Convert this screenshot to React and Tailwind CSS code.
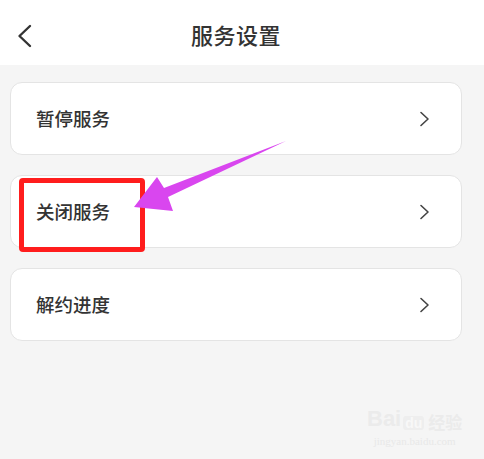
import React from 'react'

const items = ['暂停服务', '关闭服务', '解约进度']

function Chevron({ className, d }) {
    return (
        <svg className={className} viewBox="0 0 10 16" fill="none" stroke="currentColor" strokeWidth="1.6" strokeLinecap="round" strokeLinejoin="round">
            <path d={d} />
        </svg>
    )
}

export default function App() {
    return (
        <div className="relative w-[484px] h-[459px] overflow-hidden bg-[#f5f5f5] text-[#333]" style={{ fontFamily: '"Noto Sans CJK SC", "Noto Sans", sans-serif' }}>

            <header className="relative h-[65px] bg-white flex items-center justify-center">
                <svg className="absolute left-[16px] top-[24px] w-[17px] h-[24px] text-[#333]" viewBox="0 0 17 24" fill="none" stroke="currentColor" strokeWidth="2.4" strokeLinecap="round" strokeLinejoin="round">
                    <path d="M14 2 L3.5 12 L14 22" />
                </svg>
                <h1 className="text-[22px] font-medium tracking-[0.5px] text-[#333] mt-[3px] mr-[12px]">服务设置</h1>
            </header>

            <div className="flex flex-col gap-[20px] pl-[10px] pr-[22px] pt-[17px]">
                {items.map(label => (
                    <div key={label} className="h-[73px] rounded-[12px] bg-white border border-[#e4e4e4] flex items-center justify-between pl-[25px] pr-[31px]">
                        <span className="text-[18.5px] font-medium leading-none">{label}</span>
                        <Chevron className="w-[11px] h-[16px] text-[#444]" d="M1.5 1.5 L8.5 8 L1.5 14.5" />
                    </div>
                ))}
            </div>

            {/* highlight box around the second row */}
            <div className="absolute left-[19px] top-[178px] w-[126px] h-[74px] border-[5px] border-[#ff1d1d] rounded-[4px]" />

            {/* pointer arrow */}
            <svg className="absolute inset-0 w-[484px] h-[459px] pointer-events-none" viewBox="0 0 484 459">
                <polygon fill="#d946ef" points="286,141 164,188 157,177 134,207 173,211 168,197" />
            </svg>

            {/* watermark */}
            <div className="absolute left-[367px] top-[408px] flex flex-col items-center text-[#ebebeb] leading-none select-none" style={{ fontFamily: '"Liberation Sans", sans-serif' }}>
                <div className="flex items-end gap-[2px]">
                    <span className="text-[22px] font-bold">Bai</span>
                    <span className="text-[14px] font-bold bg-[#eeeeee] text-[#f8f8f8] rounded-[3px] px-[2px]">du</span>
                    <span className="text-[17px] font-bold ml-[2px]" style={{ fontFamily: '"Noto Sans CJK SC", sans-serif' }}>经验</span>
                </div>
                <span className="text-[11px] mt-[6px] text-[#e8e8e8]" style={{ fontFamily: '"Liberation Serif", serif' }}>jingyan.baidu.com</span>
            </div>
        </div>
    )
}
